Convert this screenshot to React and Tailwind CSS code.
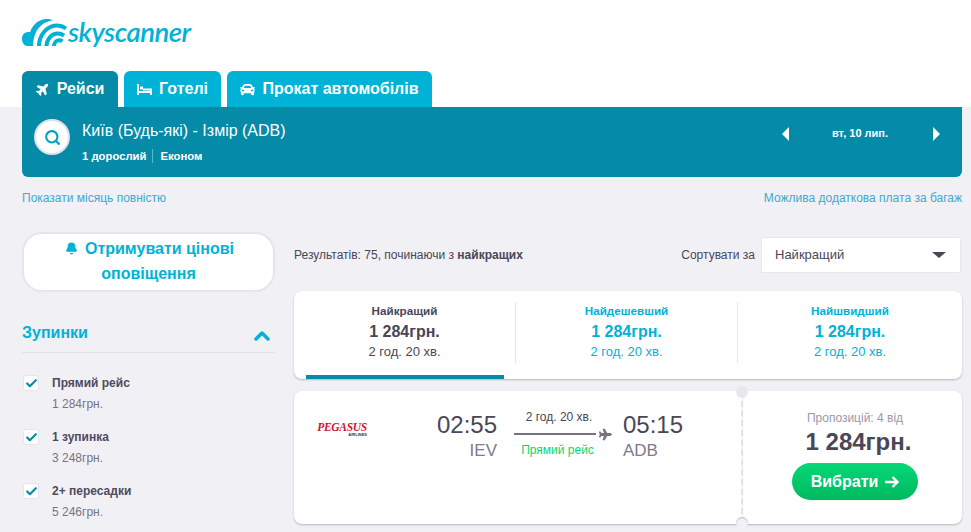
import { Bell, Check, ChevronUp, Search } from "lucide-react";
import { FaCar, FaPlane } from "react-icons/fa";

const SANS = "font-['Liberation_Sans',Arial,sans-serif]";

const Logo = () => (
  <div className="flex items-center h-[30px]">
    <svg width="46" height="30" viewBox="0 0 46 30" fill="none">
      <path
        d="M0 21.500C0 17.800 2.800 15 6.200 15c.7 0 1.300.1 1.900.3C10.200 8.200 15.800 3 22.500 2.200c3-.4 6 .1 8.600 1.300-7.600.4-14.500 5.400-17.700 13-1.400 3.300-2.200 7-2.300 12.500H5.500C2.300 29 0 25.600 0 21.500Z"
        fill="#00b2d6"
      />
      <path d="M17 29c.2-11 7.800-20 17.500-20.500 3.500-.2 6.800 1 9.500 3" stroke="#00b2d6" strokeWidth="4" />
      <path d="M24.500 29c.2-6.500 4.800-12 10.500-12.400 2.600-.2 5 .6 7 2" stroke="#00b2d6" strokeWidth="4" />
      <path d="M32 29c.1-3 2.200-5.500 4.800-5.700 1.300-.1 2.600.3 3.600 1" stroke="#00b2d6" strokeWidth="4" />
    </svg>
    <span className="font-['Lato',sans-serif] italic font-semibold text-[27.5px] leading-[28px] tracking-[-0.5px] text-[#00b2d6]">
      skyscanner
    </span>
  </div>
);

const BedIcon = () => (
  <svg width="15" height="13" viewBox="0 0 15 13" fill="none" stroke="white" strokeWidth="2">
    <path d="M1 1v11M1 9h13M14 12V6.500H6" />
    <path d="M3 5h3" strokeWidth="3" />
  </svg>
);

const Tab = ({ icon, label, active, className }) => (
  <div
    className={`h-9 rounded-t-md flex items-center justify-center gap-[7px] text-white font-bold text-[16px] ${
      active ? "bg-[#058aa7]" : "bg-[#00b2d6]"
    } ${className}`}
  >
    {icon}
    <span>{label}</span>
  </div>
);

const Stop = ({ label, price }) => (
  <div className="flex h-[54px] pl-[1px]">
    <div className="w-4 h-4 bg-white rounded-[3px] border border-[#e6e5eb] flex items-center justify-center shrink-0">
      <Check size={13} strokeWidth={4} className="text-[#058aa7]" />
    </div>
    <div className="ml-[13px]">
      <div className="text-xs font-bold leading-[16px] text-[#4f4b5f]">{label}</div>
      <div className="text-xs leading-[18px] mt-[4px] text-[#77747f]">{price}</div>
    </div>
  </div>
);

const SortTab = ({ title, active, line, className }) => (
  <div className={`h-[61px] flex flex-col items-center ${line ? "border-l border-[#e6e5eb]" : ""} ${active ? "text-[#4a4656]" : "text-[#00b2d6]"} ${className}`}>
    <div className="text-[11.700px] font-bold leading-[16px] mt-[1px]">{title}</div>
    <div className="text-base font-bold leading-[20px] mt-[3px]">1 284грн.</div>
    <div className="text-[13px] leading-[16px] mt-[2px]">2 год. 20 хв.</div>
  </div>
);

export default function App() {
  return (
    <div className={`w-[971px] h-[532px] overflow-hidden bg-[#f1f0f5] ${SANS}`}>
      <div className="bg-white h-[107px] px-[22px] pt-[17px]">
        <Logo />
        <div className="flex gap-[6px] mt-6">
          <Tab active label="Рейси" className="w-24" icon={<FaPlane size={14} className="-rotate-45" />} />
          <Tab label="Готелі" className="w-[97px]" icon={<BedIcon />} />
          <Tab label="Прокат автомобілів" className="w-[205px]" icon={<FaCar size={15} />} />
        </div>
      </div>

      <div className="ml-[22px] w-[940px] h-[70px] bg-[#058aa7] rounded-b-md flex text-white pl-3 pr-[22px]">
        <div className="w-9 h-9 mt-3 rounded-full bg-white border-2 border-[#dfe1ea] flex items-center justify-center shrink-0">
          <Search size={17} strokeWidth={3} className="text-[#00a0c4]" />
        </div>
        <div className="ml-3">
          <div className="text-[16px] leading-[20px] mt-[14px]">Київ (Будь-які) - Ізмір (ADB)</div>
          <div className="flex items-center mt-[8px] text-[11.300px] font-bold leading-[14px]">
            <span className="pr-[5px] border-r border-[#5fb6ca]">1 дорослий</span>
            <span className="pl-2">Економ</span>
          </div>
        </div>
        <div className="ml-auto flex items-start mt-[20px] text-[11px] font-bold">
          <div className="w-0 h-0 border-y-[7px] border-y-transparent border-r-[7px] border-r-white" />
          <span className="w-[144px] text-center leading-[13px] pr-[2px]">вт, 10 лип.</span>
          <div className="w-0 h-0 border-y-[7px] border-y-transparent border-l-[7px] border-l-white" />
        </div>
      </div>

      <div className="ml-[22px] w-[940px] flex justify-between text-xs leading-4 text-[#3fa9cf] mt-[13px]">
        <span>Показати місяць повністю</span>
        <span>Можлива додаткова плата за багаж</span>
      </div>

      <div className="ml-[22px] w-[940px] flex mt-[26px]">
        <div className="w-[253px] shrink-0">
          <div className="h-[60px] bg-white rounded-[20px] border-2 border-[#e6e5eb] text-center text-[#00b2d6] font-bold text-[16px] leading-[25px] pt-[2px]">
            <div className="flex justify-center items-center gap-[7px] pl-[2px]">
              <Bell size={13} fill="currentColor" />
              <span>Отримувати цінові</span>
            </div>
            <div>оповіщення</div>
          </div>
          <div className="mt-[29px] h-[32px] border-b border-[#e2e1e8] flex justify-between text-[#00b2d6]">
            <span className="font-bold text-[16px] leading-[24px]">Зупинки</span>
            <ChevronUp size={24} strokeWidth={3.500} className="mt-[3px] mr-[1px]" />
          </div>
          <div className="mt-[22px]">
            <Stop label="Прямий рейс" price="1 284грн." />
            <Stop label="1 зупинка" price="3 248грн." />
            <Stop label="2+ пересадки" price="5 246грн." />
          </div>
        </div>

        <div className="ml-[19px] w-[668px]">
          <div className="flex items-center h-9 mt-[5px] pr-[1px] text-xs text-[#4a4656]">
            <span>
              Результатів: 75, починаючи з <b>найкращих</b>
            </span>
            <span className="ml-auto mr-[6px]">Сортувати за</span>
            <div className="w-[200px] h-9 bg-white border border-[#e9e8ee] rounded-[2px] flex items-center justify-between pl-[13px] pr-[14px] text-[13px]">
              <span>Найкращий</span>
              <div className="w-0 h-0 border-x-[7px] border-x-transparent border-t-[6px] border-t-[#4a4656]" />
            </div>
          </div>

          <div className="mt-[18px] h-[88px] bg-white rounded-lg shadow-[0_1px_2px_rgba(70,70,90,0.35)] overflow-hidden pt-[11px] relative">
            <div className="flex">
              <SortTab active title="Найкращий" className="w-[221px]" />
              <SortTab line title="Найдешевший" className="w-[222px]" />
              <SortTab line title="Найшвидший" className="flex-1" />
            </div>
            <div className="absolute left-3 bottom-0 w-[198px] h-1 bg-[#058aa7]" />
          </div>

          <div className="mt-[12px] h-[133px] flex">
            <div className="w-[448px] bg-white rounded-l-lg shadow-[0_1px_2px_rgba(70,70,90,0.35)] flex relative">
              <div className="w-[120px] pl-[22px] pt-[32px]">
                <div className="w-[52px] text-center">
                  <div className="text-[#d3112b] font-bold italic font-['Liberation_Serif',serif] text-[11.500px] leading-[9px] tracking-[-0.3px]">PEGASUS</div>
                  <div className="text-[#333] font-bold text-[4px] leading-[5px] text-right pr-[1px]">AIRLINES</div>
                </div>
              </div>
              <div className="w-[83px] pt-[20px] text-right">
                <div className="text-[24px] leading-[28px] text-[#4a4656]">02:55</div>
                <div className="text-[17px] leading-[20px] mt-[2px] text-[#7d7a8b]">IEV</div>
              </div>
              <div className="ml-[17px] w-[82px] pt-[18px] text-center whitespace-nowrap">
                <div className="text-xs leading-[16px] pl-[8px] text-[#4a4656]">2 год. 20 хв.</div>
                <div className="h-[2px] bg-[#77747f] mt-[8px]" />
                <div className="text-xs leading-[16px] pl-[5px] mt-[7px] text-[#09d66f]">Прямий рейс</div>
              </div>
              <FaPlane size={13} className="text-[#77747f] ml-[3px] mt-[37px]" />
              <div className="ml-[11px] pt-[20px]">
                <div className="text-[24px] leading-[28px] text-[#4a4656]">05:15</div>
                <div className="text-[17px] leading-[20px] mt-[2px] text-[#7d7a8b]">ADB</div>
              </div>
              <div className="absolute right-[-1px] top-0 h-full border-r-2 border-dashed border-[#e3e2e8]" />
              <div className="absolute right-[-6px] top-[-5px] w-[12px] h-[12px] rounded-full bg-[#e8e8ec]" />
              <div className="absolute right-[-6px] bottom-[-5px] w-[12px] h-[12px] rounded-full bg-[#f1f0f5] shadow-[inset_0_1px_1px_rgba(70,70,90,0.3)]" />
            </div>
            <div className="w-[220px] bg-white rounded-r-lg shadow-[0_1px_2px_rgba(70,70,90,0.35)] flex flex-col items-center pt-[19px] pl-[6px]">
              <div className="text-xs leading-[16px] text-[#9a98a6]">Пропозицій: 4 від</div>
              <div className="text-[24px] leading-[28px] font-bold mt-[2px] pl-[7px] text-[#4a4656]">1 284грн.</div>
              <div className="mt-[7px] w-[126px] h-[37px] rounded-[19px] bg-gradient-to-b from-[#06d877] to-[#00b95f] text-white font-bold text-[16px] flex items-center justify-center gap-[7px]">
                <span>Вибрати</span>
                <svg width="14" height="12" viewBox="0 0 14 12" fill="none" stroke="white" strokeWidth="2.400">
                  <path d="M0 6h12M7.500 1l5 5-5 5" />
                </svg>
              </div>
            </div>
          </div>
        </div>
      </div>
    </div>
  );
}
